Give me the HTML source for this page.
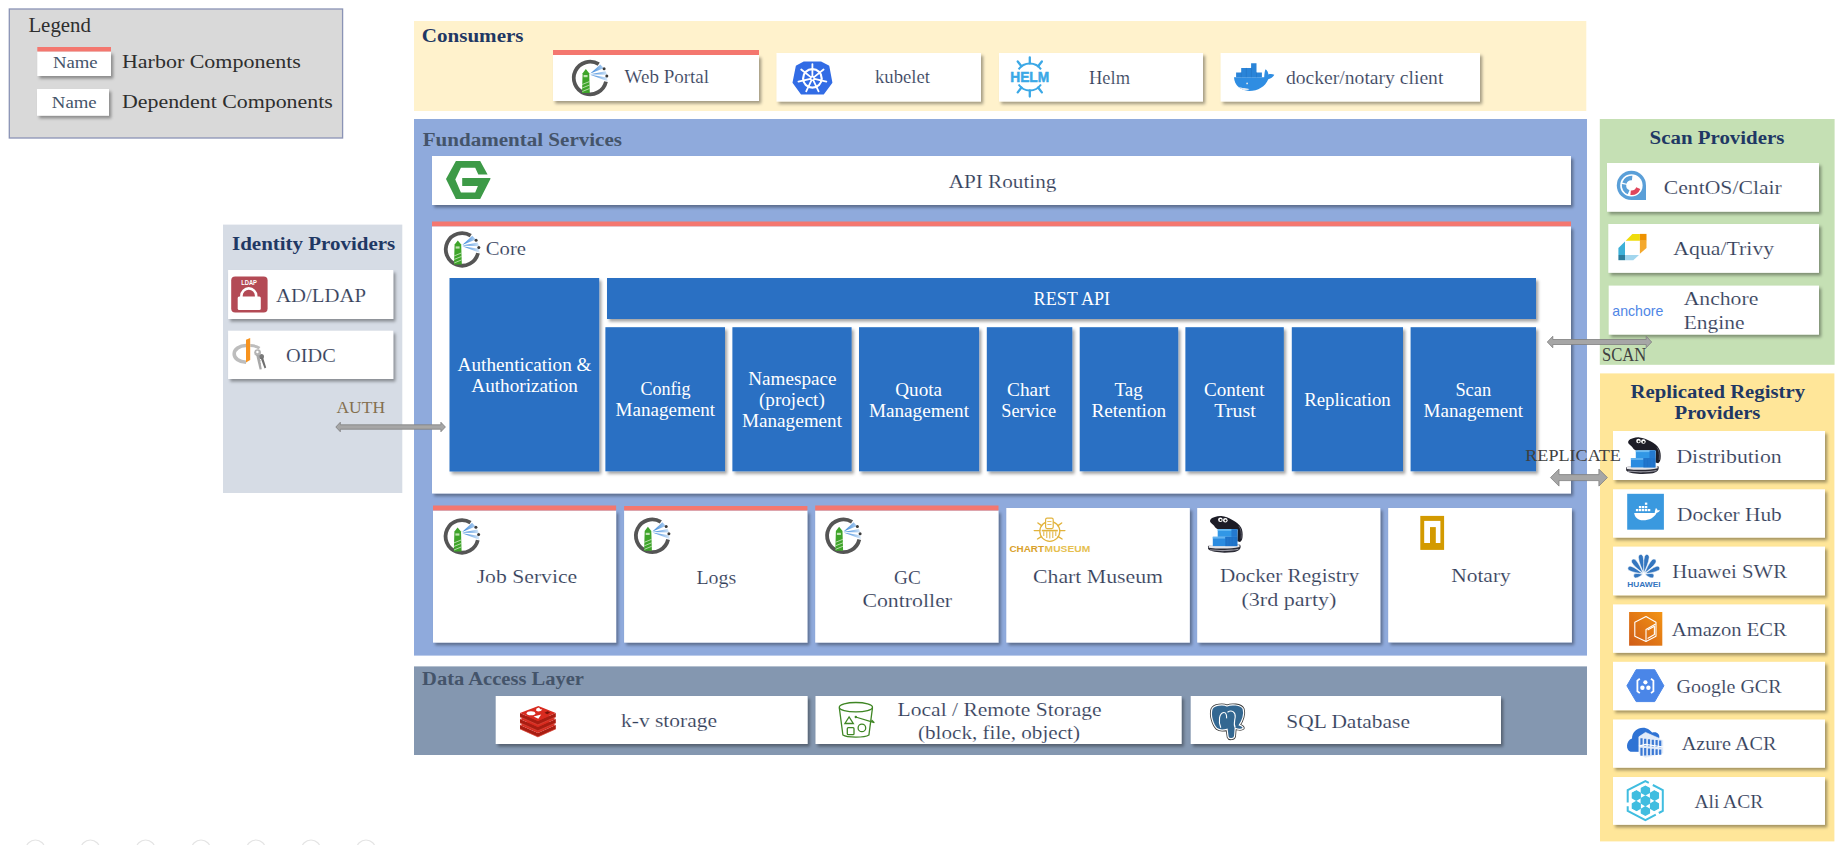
<!DOCTYPE html>
<html><head><meta charset="utf-8"><title>Harbor Architecture</title>
<style>
html,body{margin:0;padding:0;background:#fff;overflow:hidden}
svg{display:block}
svg{font-family:"Liberation Serif",serif}
</style></head><body>
<svg width="1838" height="845" viewBox="0 0 1838 845">
<defs>
<filter id="sh" x="-10%" y="-10%" width="130%" height="140%">
<feDropShadow dx="2.2" dy="2.6" stdDeviation="1.5" flood-color="#000" flood-opacity="0.36"/>
</filter>
<linearGradient id="rayg" x1="25" y1="0" x2="42" y2="0" gradientUnits="userSpaceOnUse"><stop offset="0" stop-color="#2f80d8"/><stop offset="1" stop-color="#d4e6f8"/></linearGradient>
<linearGradient id="ecrg" x1="0" y1="1" x2="1" y2="0"><stop offset="0" stop-color="#d05c17"/><stop offset="1" stop-color="#f39414"/></linearGradient>
<g id="harbor"><path d="M40.98,26.67 A16.3,16.3 0 1 1 33.74,9.18" fill="none" stroke="#555" stroke-width="3.8"/><polygon points="17.00,38.00 17.60,18.20 20.80,14.00 24.20,18.20 24.80,38.00" fill="#3ea42a"/><path d="M17.2,29.5 L24.6,26.5 M17.2,33 L24.6,30 M17.3,36.5 L24.6,33.5" stroke="#cfeac4" stroke-width="0.8"/><rect x="18.6" y="20" width="4" height="2.2" fill="#bfe3b0"/><polygon points="25.30,18.60 35.30,9.40 38.80,13.20" fill="url(#rayg)"/><polygon points="25.30,19.20 40.60,16.20 42.20,19.80" fill="url(#rayg)"/><polygon points="25.30,19.80 42.00,22.40 42.60,26.30" fill="url(#rayg)"/><circle cx="39.1" cy="13.8" r="1.5" fill="#3c3c3c"/><circle cx="41.8" cy="21" r="1.5" fill="#3c3c3c"/></g>
<g id="k8s"><path d="M16.1,4.2 L32.7,4.2 L40.5,8.2 L43.6,24.6 L35.3,35.8 L13.5,35.8 L5.3,24.6 L8.6,8.2 Z" fill="#326ce5" stroke="#326ce5" stroke-width="1.6" stroke-linejoin="round"/><circle cx="24.4" cy="20.4" r="9.3" fill="none" stroke="#fff" stroke-width="2.2"/><path d="M24.4,20.4 L24.40,6.10 M24.4,20.4 L35.58,11.48 M24.4,20.4 L38.34,23.58 M24.4,20.4 L30.60,33.28 M24.4,20.4 L18.20,33.28 M24.4,20.4 L10.46,23.58 M24.4,20.4 L13.22,11.48 " stroke="#fff" stroke-width="1.8" stroke-linecap="round"/><circle cx="24.4" cy="20.4" r="2.3" fill="#fff"/><circle cx="24.4" cy="20.4" r="1" fill="#326ce5"/></g>
<g id="helm"><path d="M13.61,15.35 A13.5,13.5 0 0 1 35.99,15.35 M13.61,30.45 A13.5,13.5 0 0 0 35.99,30.45" fill="none" stroke="#3ba8e6" stroke-width="2"/><path d="M24.80,9.40 L24.80,3.30 M16.49,12.26 L12.73,7.45 M33.11,12.26 L36.87,7.45 M24.80,36.40 L24.80,42.50 M16.49,33.54 L12.73,38.35 M33.11,33.54 L36.87,38.35 " stroke="#3ba8e6" stroke-width="2.3" stroke-linecap="round"/><text x="5.3" y="28.2" style="font-family:&quot;Liberation Sans&quot;,sans-serif" font-weight="bold" font-size="14.5" fill="#3ba8e6" stroke="#3ba8e6" stroke-width="0.5" textLength="38.9" lengthAdjust="spacingAndGlyphs">HELM</text></g>
<g id="whale"><path d="M4,19.3 L34.2,19.3 C34.3,16 34.8,12.5 35.6,11.2 C37.2,12.2 38.3,14.3 38.4,16.4 C40.2,15.8 42.6,15.9 44.3,16.8 C43.2,19 40.8,20.6 38.3,21.2 C35.3,28.5 28,32.9 19.3,32.9 C10.5,32.9 4.3,27 4,19.3 Z" fill="#2f8de2"/><path d="M6.1,14.4 H31.9 V19.3 H6.1 Z M11.2,9.9 H26.5 V14.4 H11.2 Z M21.1,5.2 H26.5 V9.9 H21.1 Z" fill="#2a84d8"/><path d="M11.2,14.4 V19.3 M16.3,9.9 V19.3 M21.4,9.9 V19.3 M26.5,14.4 V19.3" stroke="#2270c0" stroke-width="0.5"/><path d="M8,28.5 C12,30.6 16.5,29.8 19.5,31.2 C16,33.2 11,32 8,28.5 Z" fill="#dfe8f2"/><circle cx="17.1" cy="25.4" r="0.9" fill="#e8e8e8"/></g>
<g id="nginx"><polygon points="0.00,18.30 9.90,0.25 34.20,0.25 41.60,13.90 32.30,13.90 29.20,7.10 14.90,7.10 9.30,18.90 14.90,31.90 29.20,31.90 31.90,25.40 16.20,25.40 16.20,17.40 44.40,17.40 44.40,18.30 34.20,38.40 9.90,38.40" fill="#3d9a47"/></g>
<g id="ldap"><rect x="5.2" y="4.6" width="36.4" height="36" rx="4" fill="#b34a55"/><rect x="11.7" y="24.5" width="23.1" height="13.6" rx="1.5" fill="#fff"/><path d="M15.4,25.5 V23.8 A7.4,7.4 0 0 1 30.2,23.8 V25.5" fill="none" stroke="#fff" stroke-width="2.6"/><text x="15.2" y="13.1" style="font-family:&quot;Liberation Sans&quot;,sans-serif" font-weight="bold" font-size="6.8" fill="#fff" textLength="15.8" lengthAdjust="spacingAndGlyphs">LDAP</text></g>
<g id="oidc"><path d="M18,11.5 A11.8,8.4 0 0 0 18,28.3" fill="none" stroke="#bdbdbd" stroke-width="3.6"/><path d="M22.3,11.6 Q28,11.6 31.5,14.2" fill="none" stroke="#bdbdbd" stroke-width="3"/><polygon points="18.00,5.70 22.20,4.00 22.20,26.00 18.00,28.40" fill="#f7931e"/><circle cx="33.4" cy="22.5" r="2.6" fill="#7a7a7a"/><polygon points="32.6,24 35,23.6 38.2,33.6 36.6,34.4" fill="#6e6e6e"/><circle cx="29.6" cy="18.6" r="3.4" fill="#b4b4b4"/><circle cx="29.4" cy="18" r="1.2" fill="#fff"/><polygon points="28.2,21 31.2,21 33.8,35.2 31.6,35.6" fill="#a8a8a8"/><path d="M30.6,27 L32.6,26.6 M31.2,30 L33,29.6" stroke="#a8a8a8" stroke-width="1"/></g>
<g id="chartm"><circle cx="44.8" cy="19.3" r="10" fill="none" stroke="#e2b33c" stroke-width="1.3"/><path d="M29.2,18.6 H34.8 M54.8,18.6 H59.9 M36.61,13.56 L32.92,10.98 M52.99,13.56 L56.68,10.98 M36.32,24.60 L32.50,26.98 M53.28,24.60 L57.10,26.98 " stroke="#e2b33c" stroke-width="1.4" stroke-linecap="round"/><rect x="40.6" y="6.2" width="7.6" height="10.4" rx="1.5" fill="#fff" stroke="#e2b33c" stroke-width="1.2"/><path d="M42.3,9.5 H46.5 M42.3,12.5 H46.5" stroke="#e2b33c" stroke-width="0.8"/><rect x="36.8" y="17.8" width="16" height="1.6" fill="#e2b33c"/><path d="M38.8,19.4 V24 M41.8,19.4 V26 M44.8,19.4 V26.5 M47.8,19.4 V26 M50.8,19.4 V24" stroke="#e2b33c" stroke-width="1"/><text x="4.4" y="40.1" style="font-family:&quot;Liberation Sans&quot;,sans-serif" font-weight="bold" font-size="9.9" fill="#d9a12b" textLength="34.6" lengthAdjust="spacingAndGlyphs">CHART</text><text x="39.6" y="40.1" style="font-family:&quot;Liberation Sans&quot;,sans-serif" font-weight="bold" font-size="9.9" fill="#e6bf50" textLength="45.6" lengthAdjust="spacingAndGlyphs">MUSEUM</text></g>
<g id="distr"><path d="M6,35.6 C8,33.6 13,34.6 19,35 C26,35.4 33,33.4 38.2,34 C40,37 37.5,41 30.5,41.6 C21,42.4 10,42 6.2,38.4 Z" fill="#2a2a34"/><path d="M8,39.4 C12,38.6 17.5,40.4 23,39.8 C29,39.2 33.5,39.8 36.5,38.6" fill="none" stroke="#9a9aa4" stroke-width="1.1"/><path d="M6.8,34.6 C13,33.6 27,35.8 37.6,33.6 L37.6,36.2 C30,38 18,38.4 6.8,37 Z" fill="#e4e4e8"/><path d="M8.2,9.5 C9,7.5 11,6.6 13,6.2 C15,5.6 17,5.2 19.5,5.4 C23,5.6 27,7.5 30.5,9.3 C34,11 37.5,13.5 39.2,16.9 C40.6,19.5 41,23 40.6,26.5 C40.3,29 39.5,30.6 38.1,31.2 L35.4,30.6 L35.7,19 C32,18.2 22,18.2 16.3,18.5 C14.5,18.2 13.2,16.5 12.2,15 C11,13.6 9,12.6 8.2,11 Z" fill="#1c1c26"/><path d="M37,15.5 C39,18 39.8,22 39.2,28" fill="none" stroke="#60606c" stroke-width="0.9"/><circle cx="18.5" cy="9" r="2.3" fill="#fff"/><circle cx="23.4" cy="9.5" r="2.3" fill="#fff"/><circle cx="18.7" cy="9.4" r="1" fill="#111"/><circle cx="23.6" cy="9.9" r="1" fill="#111"/><rect x="15.8" y="18.5" width="19.6" height="7.6" fill="#3197e6"/><rect x="15.8" y="18.5" width="19.6" height="1.6" fill="#6cbcf4"/><rect x="10.9" y="26.1" width="24.5" height="9.3" fill="#2a8be0"/><rect x="10.9" y="26.1" width="12.5" height="1.8" fill="#64b4f0"/><rect x="23.4" y="26.1" width="12" height="9.3" fill="#1f72c8"/><rect x="29.5" y="18.5" width="5.9" height="7.6" fill="#2479cf"/><path d="M26,27 V35 M29,27 V35 M32,27 V35" stroke="#2a82d8" stroke-width="0.5"/></g>
<g id="redis"><path d="M5,24.9 L22.9,32.9 L40.8,24.9 L40.8,28.9 L22.9,36.9 L5,28.9 Z" fill="#a81d12"/><polygon points="5.00,24.90 23.40,18.00 40.80,24.90 22.90,32.90" fill="#d82b1f"/><path d="M5,28.9 L22.9,36.9 L40.8,28.9" fill="none" stroke="#e04a3c" stroke-width="0.7"/><path d="M5,18.9 L22.9,26.9 L40.8,18.9 L40.8,22.9 L22.9,30.9 L5,22.9 Z" fill="#a81d12"/><polygon points="5.00,18.90 23.40,12.00 40.80,18.90 22.90,26.90" fill="#d82b1f"/><path d="M5,22.9 L22.9,30.9 L40.8,22.9" fill="none" stroke="#e04a3c" stroke-width="0.7"/><path d="M5,12.9 L22.9,20.9 L40.8,12.9 L40.8,16.9 L22.9,24.9 L5,16.9 Z" fill="#a81d12"/><polygon points="5.00,12.90 23.40,6.00 40.80,12.90 22.90,20.90" fill="#d82b1f"/><path d="M5,16.9 L22.9,24.9 L40.8,16.9" fill="none" stroke="#e04a3c" stroke-width="0.7"/><ellipse cx="16" cy="13.2" rx="4.3" ry="2" fill="#fff"/><polygon points="21.50,8.50 24.00,7.60 25.30,9.30 27.30,9.60 25.80,11.00 23.00,11.40 21.00,10.60" fill="#fff"/><polygon points="18.60,16.60 26.20,14.60 23.30,18.70" fill="#fff"/><polygon points="29.50,12.80 32.50,11.20 35.20,12.60 32.20,14.20" fill="#7a1309"/></g>
<g id="bucket"><g fill="none" stroke="#3f8624" stroke-width="1.3"><ellipse cx="21.9" cy="9.2" rx="16.6" ry="4.7"/><path d="M5.3,9.6 L8.9,37 C13,39.8 30.5,39.8 34.9,37 L38.5,9.6"/><polygon points="10.9,25.5 15.1,19 19.3,25.5"/><rect x="13.3" y="29.7" width="6.7" height="7" rx="1"/><circle cx="27.9" cy="29.9" r="3.8"/><path d="M21.6,19 L40.3,24.7 L37.5,22"/></g><circle cx="21.8" cy="19" r="1.2" fill="#3f8624"/></g>
<g id="pg"><path d="M8,9 C10,4.5 19.5,4.2 23,6 C27,4 37,4.3 39.2,9 C40.8,14 38.3,21 35.3,25 C37.2,25.8 39.6,26.5 39.2,28.2 C37.5,29.8 33.5,29.3 31.2,28.3 L30.6,36 C30.2,39.2 25,39.6 24.1,37 L23.1,29.3 C20,30.2 15.2,30.2 13,28.6 C9,25 6,15 8,9 Z" fill="#336791" stroke="#3a3a3a" stroke-width="2.8"/><path d="M8,9 C10,4.5 19.5,4.2 23,6 C27,4 37,4.3 39.2,9 C40.8,14 38.3,21 35.3,25 C37.2,25.8 39.6,26.5 39.2,28.2 C37.5,29.8 33.5,29.3 31.2,28.3 L30.6,36 C30.2,39.2 25,39.6 24.1,37 L23.1,29.3 C20,30.2 15.2,30.2 13,28.6 C9,25 6,15 8,9 Z" fill="#336791" stroke="#fff" stroke-width="1.2"/><path d="M16.8,27.8 C14.2,21 15,13.2 19.8,12.5 C22.2,12.4 22.8,15.5 22.6,18.4 M23.5,12.3 C27.5,9.3 31.6,12 31.2,17 C30.8,21 29.2,24.2 31.2,27.6" fill="none" stroke="#fff" stroke-width="1.1"/></g>
<g id="clair"><path d="M34,19.4 L34,34 L19.4,34 A14.6,14.6 0 1 1 34,19.4 Z" fill="#5a9fd8"/><circle cx="19.4" cy="19.4" r="11.2" fill="#fff"/><path d="M10.27,16.43 A9.6,9.6 0 0 1 20.40,9.85 L19.94,14.23 A5.2,5.2 0 0 0 14.45,17.79 Z M15.80,28.30 A9.6,9.6 0 0 1 9.89,18.06 L14.25,18.68 A5.2,5.2 0 0 0 17.45,24.22 Z" fill="#5a9fd8"/><path d="M28.30,23.00 A9.6,9.6 0 0 1 18.40,28.95 L18.86,24.57 A5.2,5.2 0 0 0 24.22,21.35 Z" fill="#e0455b"/></g>
<g id="trivy"><polygon points="13.70,12.80 20.40,5.90 27.90,5.90 27.90,12.80" fill="#efdc0c"/><rect x="27.9" y="5.9" width="6.6" height="6.9" fill="#ee9200"/><polygon points="27.90,12.80 34.50,12.80 34.50,19.90 27.90,25.80" fill="#f4a92e"/><polygon points="6.40,19.90 13.00,13.50 13.00,27.00 6.40,27.00" fill="#3cb0d8"/><rect x="6.4" y="27" width="6.6" height="5.2" fill="#2b7c9c"/><polygon points="13.00,27.00 27.00,27.00 21.30,32.20 13.00,32.20" fill="#a2d6ee"/></g>
<g id="dhub"><rect x="5.2" y="3.8" width="36.7" height="35.9" fill="#3a99df"/><path d="M12.2,22.9 L32.7,22.9 C32.9,21 33.4,19 34,18 C35,18.7 35.6,19.8 35.6,20.6 C36.5,20.3 37.5,20.3 38,20.6 C37.2,21.8 36,22.6 34.5,22.9 C32.5,27.5 27,30.2 21.2,30.2 C15.5,30.2 12.5,26.5 12.2,22.9 Z" fill="#fff"/><rect x="13.9" y="19" width="2.4" height="2.2" fill="#fff"/><rect x="16.9" y="19" width="2.4" height="2.2" fill="#fff"/><rect x="19.9" y="19" width="2.4" height="2.2" fill="#fff"/><rect x="22.9" y="19" width="2.4" height="2.2" fill="#fff"/><rect x="25.9" y="19" width="2.4" height="2.2" fill="#fff"/><rect x="16.9" y="16" width="2.4" height="2.2" fill="#fff"/><rect x="19.9" y="16" width="2.4" height="2.2" fill="#fff"/><rect x="22.9" y="16" width="2.4" height="2.2" fill="#fff"/><rect x="22.9" y="12.6" width="2.4" height="2.2" fill="#fff"/></g>
<g id="huawei"><path d="M0,-1.2 C-1.12,-6.15 -2.88,-12.71 -2.38,-17.63 C-1.75,-20.91 1.75,-20.91 2.38,-17.63 C2.88,-12.71 1.12,-6.15 0,-1.2 Z" transform="translate(21.8,26.2) rotate(-10)" fill="#3476bf" stroke="#fff" stroke-width="0.5"/><path d="M0,-1.2 C-1.12,-6.15 -2.88,-12.71 -2.38,-17.63 C-1.75,-20.91 1.75,-20.91 2.38,-17.63 C2.88,-12.71 1.12,-6.15 0,-1.2 Z" transform="translate(21.8,26.2) rotate(10)" fill="#3476bf" stroke="#fff" stroke-width="0.5"/><path d="M0,-1.2 C-1.12,-5.70 -2.88,-11.78 -2.38,-16.34 C-1.75,-19.38 1.75,-19.38 2.38,-16.34 C2.88,-11.78 1.12,-5.70 0,-1.2 Z" transform="translate(21.8,26.2) rotate(-38)" fill="#3476bf" stroke="#fff" stroke-width="0.5"/><path d="M0,-1.2 C-1.12,-5.70 -2.88,-11.78 -2.38,-16.34 C-1.75,-19.38 1.75,-19.38 2.38,-16.34 C2.88,-11.78 1.12,-5.70 0,-1.2 Z" transform="translate(21.8,26.2) rotate(38)" fill="#3476bf" stroke="#fff" stroke-width="0.5"/><path d="M0,-1.2 C-1.08,-5.25 -2.76,-10.85 -2.28,-15.05 C-1.68,-17.85 1.68,-17.85 2.28,-15.05 C2.76,-10.85 1.08,-5.25 0,-1.2 Z" transform="translate(21.8,26.2) rotate(-67)" fill="#3476bf" stroke="#fff" stroke-width="0.5"/><path d="M0,-1.2 C-1.08,-5.25 -2.76,-10.85 -2.28,-15.05 C-1.68,-17.85 1.68,-17.85 2.28,-15.05 C2.76,-10.85 1.08,-5.25 0,-1.2 Z" transform="translate(21.8,26.2) rotate(67)" fill="#3476bf" stroke="#fff" stroke-width="0.5"/><path d="M0,-1.2 C-0.99,-3.15 -2.53,-6.51 -2.09,-9.03 C-1.54,-10.71 1.54,-10.71 2.09,-9.03 C2.53,-6.51 0.99,-3.15 0,-1.2 Z" transform="translate(21.8,26.2) rotate(-101)" fill="#3476bf" stroke="#fff" stroke-width="0.5"/><path d="M0,-1.2 C-0.99,-3.15 -2.53,-6.51 -2.09,-9.03 C-1.54,-10.71 1.54,-10.71 2.09,-9.03 C2.53,-6.51 0.99,-3.15 0,-1.2 Z" transform="translate(21.8,26.2) rotate(101)" fill="#3476bf" stroke="#fff" stroke-width="0.5"/><text x="5.2" y="38.9" style="font-family:&quot;Liberation Sans&quot;,sans-serif" font-weight="bold" font-size="7.5" fill="#3476bf" textLength="33.4" lengthAdjust="spacingAndGlyphs">HUAWEI</text></g>
<g id="ecr"><rect x="7.1" y="6" width="33.2" height="33.7" fill="url(#ecrg)"/><g fill="none" stroke="#fff" stroke-width="1.1" stroke-linejoin="round"><path d="M24,10.6 L34,16.3 L34,30.2 L24,35.4 L12.8,30.2 L12.8,16.3 Z"/><path d="M24,35.4 L24,23.6 L33.6,18"/><path d="M25.6,24 L32.4,20.2 L32.4,28.6 L25.6,32.4"/></g></g>
<g id="gcr"><polygon points="4.90,21.80 14.20,5.70 32.70,5.70 41.90,21.80 32.70,37.60 14.20,37.60" fill="#4a86e8" stroke="#4a86e8" stroke-width="1" stroke-linejoin="round"/><path d="M17.8,14.7 L15.4,16.6 L15.4,27.2 L17.8,29.1 M29,14.7 L31.4,16.6 L31.4,27.2 L29,29.1" fill="none" stroke="#fff" stroke-width="1.8"/><circle cx="23.4" cy="18.3" r="2.1" fill="#fff"/><circle cx="20.4" cy="23.7" r="2.2" fill="#fff"/><circle cx="26.4" cy="23.7" r="2.2" fill="#fff"/></g>
<g id="acr"><path d="M8.5,31.8 C3.5,30.5 3.8,20.5 10,18.6 C10,11 17,6.5 24,8.2 C27,9 29,11 30.2,12.6 C34.5,11.2 38.2,14 37.2,18 L37.2,32 Z" fill="#2f73d4"/><polygon points="16.90,16.80 23.50,12.40 41.40,20.20 41.40,33.60 23.50,38.00 16.90,34.00" fill="#e2ebf8" stroke="#fff" stroke-width="0.6"/><path d="M19.5,18.30 V25.45 M19.5,27.65 V35.67 M23.2,18.74 V25.82 M23.2,28.02 V35.49 M27,19.20 V26.20 M27,28.40 V35.30 M30.8,19.66 V26.58 M30.8,28.78 V35.11 M34.6,20.11 V26.96 M34.6,29.16 V34.92 M38.2,20.54 V27.32 M38.2,29.52 V34.74 " stroke="#3a78d4" stroke-width="2.2"/><path d="M16.9,26.2 L23.5,24.4 L41.4,27" fill="none" stroke="#fff" stroke-width="1.2"/></g>
<clipPath id="aliclip"><polygon points="23.4,7.6 37.2,14.6 37.2,30.6 23.4,38 9.4,30.6 9.4,14.6"/></clipPath>
<g id="aliacr"><path d="M26.8,4.8 L23.4,3.2 L5.7,12.2 L5.7,24.5 M5.7,28.2 L5.7,32.9 L23.4,42.2 L33.8,36.7 M36.8,35 L40.8,32.9 L40.8,12.2 L30.8,7" fill="none" stroke="#40bde0" stroke-width="2"/><g clip-path="url(#aliclip)"><polygon points="23.40,17.20 28.25,20.00 28.25,25.60 23.40,28.40 18.55,25.60 18.55,20.00" fill="#40bde0"/><polygon points="23.40,6.80 28.08,9.50 28.08,14.90 23.40,17.60 18.72,14.90 18.72,9.50" fill="#40bde0"/><polygon points="32.58,12.10 37.26,14.80 37.26,20.20 32.58,22.90 27.90,20.20 27.90,14.80" fill="#40bde0"/><polygon points="32.58,22.70 37.26,25.40 37.26,30.80 32.58,33.50 27.90,30.80 27.90,25.40" fill="#40bde0"/><polygon points="23.40,28.00 28.08,30.70 28.08,36.10 23.40,38.80 18.72,36.10 18.72,30.70" fill="#40bde0"/><polygon points="14.22,22.70 18.90,25.40 18.90,30.80 14.22,33.50 9.54,30.80 9.54,25.40" fill="#40bde0"/><polygon points="14.22,12.10 18.90,14.80 18.90,20.20 14.22,22.90 9.54,20.20 9.54,14.80" fill="#40bde0"/></g></g>
</defs>
<rect x="9.3" y="9" width="333.30" height="129.00" fill="#d9d9d9" stroke="#8a93b5" stroke-width="1.3"/>
<rect x="414" y="21" width="1172.30" height="90.00" fill="#fff2cc"/>
<rect x="414" y="119" width="1173.00" height="536.60" fill="#8faadc"/>
<rect x="414" y="666.4" width="1173.00" height="88.60" fill="#8497b0"/>
<rect x="223" y="224.6" width="179.30" height="268.40" fill="#d6dce5"/>
<rect x="1599.8" y="119" width="234.80" height="245.80" fill="#c5e0b4"/>
<rect x="1600" y="373.4" width="234.40" height="468.00" fill="#ffe699"/>
<rect x="37.3" y="51.5" width="73.70" height="24.50" fill="#fff" filter="url(#sh)"/><rect x="37.3" y="47" width="73.70" height="4.50" fill="#f4776f"/>
<rect x="37" y="89" width="72.00" height="26.70" fill="#fff" filter="url(#sh)"/>
<text x="28.40" y="31.60" font-size="21" fill="#2e2e2e" textLength="62.52" lengthAdjust="spacingAndGlyphs">Legend</text>
<text x="52.90" y="68.30" font-size="16.5" fill="#44546a" textLength="44.71" lengthAdjust="spacingAndGlyphs">Name</text>
<text x="51.80" y="108.30" font-size="16.5" fill="#44546a" textLength="44.91" lengthAdjust="spacingAndGlyphs">Name</text>
<text x="122.00" y="68.30" font-size="18.5" fill="#2e2e2e" textLength="178.81" lengthAdjust="spacingAndGlyphs">Harbor Components</text>
<text x="122.00" y="108.30" font-size="18.5" fill="#2e2e2e" textLength="210.80" lengthAdjust="spacingAndGlyphs">Dependent Components</text>
<text x="421.80" y="42.00" font-size="18.5" font-weight="bold" fill="#1f3864" textLength="101.72" lengthAdjust="spacingAndGlyphs">Consumers</text>
<rect x="553" y="55" width="206.00" height="46.00" fill="#fff" filter="url(#sh)"/><rect x="553" y="50" width="206.00" height="5.00" fill="#f4776f"/>
<rect x="776.5" y="53" width="204.50" height="48.50" fill="#fff" filter="url(#sh)"/>
<rect x="999" y="53" width="204.00" height="48.50" fill="#fff" filter="url(#sh)"/>
<rect x="1220.6" y="53" width="259.40" height="48.50" fill="#fff" filter="url(#sh)"/>
<text x="624.60" y="83.10" font-size="18" fill="#34405a" stroke="#fff" stroke-width="0.15" textLength="84.48" lengthAdjust="spacingAndGlyphs">Web Portal</text>
<text x="875.00" y="83.00" font-size="18" fill="#34405a" stroke="#fff" stroke-width="0.15" textLength="55.02" lengthAdjust="spacingAndGlyphs">kubelet</text>
<text x="1089.00" y="83.60" font-size="18" fill="#34405a" stroke="#fff" stroke-width="0.15" textLength="40.99" lengthAdjust="spacingAndGlyphs">Helm</text>
<text x="1286.00" y="83.50" font-size="18" fill="#34405a" stroke="#fff" stroke-width="0.15" textLength="157.39" lengthAdjust="spacingAndGlyphs">docker/notary client</text>
<text x="422.70" y="145.70" font-size="18.5" font-weight="bold" fill="#44546a" textLength="199.29" lengthAdjust="spacingAndGlyphs">Fundamental Services</text>
<rect x="432" y="156" width="1139.00" height="49.00" fill="#fff" filter="url(#sh)"/>
<rect x="432" y="226.3" width="1139.00" height="267.20" fill="#fff" filter="url(#sh)"/><rect x="432" y="221.5" width="1139.00" height="4.80" fill="#f4776f"/>
<rect x="449.5" y="278" width="149.70" height="193.50" fill="#2970c3" filter="url(#sh)"/>
<rect x="607" y="278" width="929.00" height="41.00" fill="#2970c3" filter="url(#sh)"/>
<rect x="605.4" y="327.2" width="119.60" height="144.10" fill="#2970c3" filter="url(#sh)"/>
<rect x="732.4" y="327.2" width="119.20" height="144.10" fill="#2970c3" filter="url(#sh)"/>
<rect x="859" y="327.2" width="120.10" height="144.10" fill="#2970c3" filter="url(#sh)"/>
<rect x="986.8" y="327.2" width="85.50" height="144.10" fill="#2970c3" filter="url(#sh)"/>
<rect x="1079.7" y="327.2" width="98.50" height="144.10" fill="#2970c3" filter="url(#sh)"/>
<rect x="1185.4" y="327.2" width="98.40" height="144.10" fill="#2970c3" filter="url(#sh)"/>
<rect x="1291.8" y="327.2" width="111.20" height="144.10" fill="#2970c3" filter="url(#sh)"/>
<rect x="1410.6" y="327.2" width="125.40" height="144.10" fill="#2970c3" filter="url(#sh)"/>
<text x="948.70" y="187.60" font-size="19.5" fill="#34405a" stroke="#fff" stroke-width="0.15" textLength="107.68" lengthAdjust="spacingAndGlyphs">API Routing</text>
<text x="485.80" y="255.00" font-size="19.5" fill="#34405a" stroke="#fff" stroke-width="0.15" textLength="40.18" lengthAdjust="spacingAndGlyphs">Core</text>
<text x="1033.60" y="305.00" font-size="18" fill="#ffffff" textLength="76.41" lengthAdjust="spacingAndGlyphs">REST API</text>
<text x="457.60" y="370.60" font-size="18" fill="#ffffff" textLength="133.92" lengthAdjust="spacingAndGlyphs">Authentication &amp;</text>
<text x="471.30" y="392.40" font-size="18" fill="#ffffff" textLength="106.59" lengthAdjust="spacingAndGlyphs">Authorization</text>
<text x="640.40" y="395.00" font-size="18" fill="#ffffff" textLength="50.21" lengthAdjust="spacingAndGlyphs">Config</text>
<text x="615.60" y="416.00" font-size="18" fill="#ffffff" textLength="99.41" lengthAdjust="spacingAndGlyphs">Management</text>
<text x="748.30" y="384.80" font-size="18" fill="#ffffff" textLength="88.22" lengthAdjust="spacingAndGlyphs">Namespace</text>
<text x="759.00" y="406.00" font-size="18" fill="#ffffff" textLength="65.80" lengthAdjust="spacingAndGlyphs">(project)</text>
<text x="742.00" y="427.00" font-size="18" fill="#ffffff" textLength="100.01" lengthAdjust="spacingAndGlyphs">Management</text>
<text x="895.30" y="395.50" font-size="18" fill="#ffffff" textLength="46.78" lengthAdjust="spacingAndGlyphs">Quota</text>
<text x="869.00" y="416.60" font-size="18" fill="#ffffff" textLength="100.01" lengthAdjust="spacingAndGlyphs">Management</text>
<text x="1007.00" y="395.50" font-size="18" fill="#ffffff" textLength="42.98" lengthAdjust="spacingAndGlyphs">Chart</text>
<text x="1001.30" y="416.60" font-size="18" fill="#ffffff" textLength="54.92" lengthAdjust="spacingAndGlyphs">Service</text>
<text x="1114.50" y="395.50" font-size="18" fill="#ffffff" textLength="28.20" lengthAdjust="spacingAndGlyphs">Tag</text>
<text x="1091.40" y="416.60" font-size="18" fill="#ffffff" textLength="74.82" lengthAdjust="spacingAndGlyphs">Retention</text>
<text x="1204.00" y="395.50" font-size="18" fill="#ffffff" textLength="60.48" lengthAdjust="spacingAndGlyphs">Content</text>
<text x="1214.20" y="416.70" font-size="18" fill="#ffffff" textLength="41.61" lengthAdjust="spacingAndGlyphs">Trust</text>
<text x="1304.20" y="405.50" font-size="18" fill="#ffffff" textLength="86.50" lengthAdjust="spacingAndGlyphs">Replication</text>
<text x="1455.40" y="395.50" font-size="18" fill="#ffffff" textLength="35.78" lengthAdjust="spacingAndGlyphs">Scan</text>
<text x="1423.50" y="416.70" font-size="18" fill="#ffffff" textLength="99.51" lengthAdjust="spacingAndGlyphs">Management</text>
<rect x="433" y="510.5" width="183.10" height="132.10" fill="#fff" filter="url(#sh)"/><rect x="433" y="505.5" width="183.10" height="5.00" fill="#f4776f"/>
<rect x="624.1" y="510.5" width="183.30" height="132.10" fill="#fff" filter="url(#sh)"/><rect x="624.1" y="506" width="183.30" height="4.50" fill="#f4776f"/>
<rect x="815.2" y="510.5" width="183.30" height="132.10" fill="#fff" filter="url(#sh)"/><rect x="815.2" y="505.5" width="183.30" height="5.00" fill="#f4776f"/>
<rect x="1006.3" y="508" width="183.50" height="134.60" fill="#fff" filter="url(#sh)"/>
<rect x="1197.2" y="508" width="183.10" height="134.60" fill="#fff" filter="url(#sh)"/>
<rect x="1388.2" y="508" width="183.70" height="134.40" fill="#fff" filter="url(#sh)"/>
<text x="476.70" y="583.00" font-size="19.5" fill="#34405a" stroke="#fff" stroke-width="0.15" textLength="100.51" lengthAdjust="spacingAndGlyphs">Job Service</text>
<text x="696.40" y="583.50" font-size="19.5" fill="#34405a" stroke="#fff" stroke-width="0.15" textLength="39.80" lengthAdjust="spacingAndGlyphs">Logs</text>
<text x="894.00" y="583.80" font-size="19.5" fill="#34405a" stroke="#fff" stroke-width="0.15" textLength="26.78" lengthAdjust="spacingAndGlyphs">GC</text>
<text x="862.40" y="607.00" font-size="19.5" fill="#34405a" stroke="#fff" stroke-width="0.15" textLength="89.71" lengthAdjust="spacingAndGlyphs">Controller</text>
<text x="1033.00" y="582.70" font-size="19.5" fill="#34405a" stroke="#fff" stroke-width="0.15" textLength="129.98" lengthAdjust="spacingAndGlyphs">Chart Museum</text>
<text x="1220.00" y="582.00" font-size="19.5" fill="#34405a" stroke="#fff" stroke-width="0.15" textLength="139.28" lengthAdjust="spacingAndGlyphs">Docker Registry</text>
<text x="1241.40" y="606.40" font-size="19.5" fill="#34405a" stroke="#fff" stroke-width="0.15" textLength="95.07" lengthAdjust="spacingAndGlyphs">(3rd party)</text>
<text x="1451.20" y="582.40" font-size="19.5" fill="#34405a" stroke="#fff" stroke-width="0.15" textLength="59.59" lengthAdjust="spacingAndGlyphs">Notary</text>
<text x="422.10" y="685.40" font-size="18.5" font-weight="bold" fill="#44546a" textLength="161.89" lengthAdjust="spacingAndGlyphs">Data Access Layer</text>
<rect x="495.7" y="696" width="311.90" height="48.00" fill="#fff" filter="url(#sh)"/>
<rect x="815.5" y="696" width="366.10" height="48.00" fill="#fff" filter="url(#sh)"/>
<rect x="1190.7" y="696" width="310.30" height="48.00" fill="#fff" filter="url(#sh)"/>
<text x="621.00" y="727.00" font-size="19.5" fill="#34405a" stroke="#fff" stroke-width="0.15" textLength="96.02" lengthAdjust="spacingAndGlyphs">k-v storage</text>
<text x="897.60" y="715.60" font-size="19.5" fill="#34405a" stroke="#fff" stroke-width="0.15" textLength="203.99" lengthAdjust="spacingAndGlyphs">Local / Remote Storage</text>
<text x="918.00" y="739.00" font-size="19.5" fill="#34405a" stroke="#fff" stroke-width="0.15" textLength="161.97" lengthAdjust="spacingAndGlyphs">(block, file, object)</text>
<text x="1286.30" y="727.70" font-size="19.5" fill="#34405a" stroke="#fff" stroke-width="0.15" textLength="123.68" lengthAdjust="spacingAndGlyphs">SQL Database</text>
<text x="232.00" y="249.70" font-size="18.5" font-weight="bold" fill="#1f3864" textLength="163.29" lengthAdjust="spacingAndGlyphs">Identity Providers</text>
<rect x="228.1" y="270" width="165.10" height="49.00" fill="#fff" filter="url(#sh)"/>
<rect x="228.1" y="330.7" width="165.10" height="48.30" fill="#fff" filter="url(#sh)"/>
<text x="276.00" y="301.70" font-size="19.5" fill="#34405a" stroke="#fff" stroke-width="0.15" textLength="90.02" lengthAdjust="spacingAndGlyphs">AD/LDAP</text>
<text x="286.00" y="362.00" font-size="19.5" fill="#34405a" stroke="#fff" stroke-width="0.15" textLength="49.69" lengthAdjust="spacingAndGlyphs">OIDC</text>
<text x="336.50" y="413.00" font-size="17" fill="#84704f" textLength="48.50" lengthAdjust="spacingAndGlyphs">AUTH</text>
<text x="1649.60" y="144.00" font-size="18.5" font-weight="bold" fill="#1f3864" textLength="134.78" lengthAdjust="spacingAndGlyphs">Scan Providers</text>
<rect x="1607" y="163" width="212.00" height="48.70" fill="#fff" filter="url(#sh)"/>
<rect x="1608.3" y="224" width="210.70" height="48.80" fill="#fff" filter="url(#sh)"/>
<rect x="1608.7" y="285.6" width="210.30" height="49.00" fill="#fff" filter="url(#sh)"/>
<text x="1663.80" y="193.75" font-size="19.5" fill="#34405a" stroke="#fff" stroke-width="0.15" textLength="117.99" lengthAdjust="spacingAndGlyphs">CentOS/Clair</text>
<text x="1673.30" y="255.00" font-size="19.5" fill="#34405a" stroke="#fff" stroke-width="0.15" textLength="100.91" lengthAdjust="spacingAndGlyphs">Aqua/Trivy</text>
<text x="1683.70" y="305.40" font-size="19.5" fill="#34405a" stroke="#fff" stroke-width="0.15" textLength="74.61" lengthAdjust="spacingAndGlyphs">Anchore</text>
<text x="1683.70" y="329.20" font-size="19.5" fill="#34405a" stroke="#fff" stroke-width="0.15" textLength="60.80" lengthAdjust="spacingAndGlyphs">Engine</text>
<text x="1602.00" y="360.50" font-size="18.5" fill="#404040" textLength="44.30" lengthAdjust="spacingAndGlyphs">SCAN</text>
<text x="1630.50" y="398.00" font-size="18.5" font-weight="bold" fill="#1f3864" textLength="174.50" lengthAdjust="spacingAndGlyphs">Replicated Registry</text>
<text x="1674.60" y="419.40" font-size="18.5" font-weight="bold" fill="#1f3864" textLength="85.80" lengthAdjust="spacingAndGlyphs">Providers</text>
<rect x="1613" y="431" width="212.00" height="49.00" fill="#fff" filter="url(#sh)"/>
<text x="1676.40" y="463.30" font-size="19.5" fill="#34405a" stroke="#fff" stroke-width="0.15" textLength="105.32" lengthAdjust="spacingAndGlyphs">Distribution</text>
<rect x="1613" y="489.3" width="212.00" height="48.30" fill="#fff" filter="url(#sh)"/>
<text x="1677.00" y="520.60" font-size="19.5" fill="#34405a" stroke="#fff" stroke-width="0.15" textLength="104.70" lengthAdjust="spacingAndGlyphs">Docker Hub</text>
<rect x="1613" y="546.6" width="212.00" height="48.70" fill="#fff" filter="url(#sh)"/>
<text x="1672.30" y="577.80" font-size="19.5" fill="#34405a" stroke="#fff" stroke-width="0.15" textLength="114.69" lengthAdjust="spacingAndGlyphs">Huawei SWR</text>
<rect x="1613" y="604.4" width="212.00" height="48.40" fill="#fff" filter="url(#sh)"/>
<text x="1671.80" y="635.70" font-size="19.5" fill="#34405a" stroke="#fff" stroke-width="0.15" textLength="114.90" lengthAdjust="spacingAndGlyphs">Amazon ECR</text>
<rect x="1613" y="661.8" width="212.00" height="48.40" fill="#fff" filter="url(#sh)"/>
<text x="1676.50" y="692.80" font-size="19.5" fill="#34405a" stroke="#fff" stroke-width="0.15" textLength="105.00" lengthAdjust="spacingAndGlyphs">Google GCR</text>
<rect x="1613" y="719.5" width="212.00" height="48.20" fill="#fff" filter="url(#sh)"/>
<text x="1681.70" y="750.30" font-size="19.5" fill="#34405a" stroke="#fff" stroke-width="0.15" textLength="94.78" lengthAdjust="spacingAndGlyphs">Azure ACR</text>
<rect x="1613" y="777" width="212.00" height="47.80" fill="#fff" filter="url(#sh)"/>
<text x="1694.40" y="808.30" font-size="19.5" fill="#34405a" stroke="#fff" stroke-width="0.15" textLength="68.78" lengthAdjust="spacingAndGlyphs">Ali ACR</text>
<text x="1525.30" y="460.60" font-size="17" fill="#404040" textLength="95.51" lengthAdjust="spacingAndGlyphs">REPLICATE</text>
<path d="M335.8,427 L340.3,422.25 L340.3,424.8 L440.9,424.8 L440.9,422.25 L445.4,427 L440.9,431.75 L440.9,429.2 L340.3,429.2 L340.3,431.75 Z" fill="#a6a6a6" stroke="#7f7f7f" stroke-width="0.8" stroke-linejoin="miter"/>
<path d="M1547.3,342 L1552.8,336.25 L1552.8,339.5 L1646.2,339.5 L1646.2,336.25 L1651.7,342 L1646.2,347.75 L1646.2,344.5 L1552.8,344.5 L1552.8,347.75 Z" fill="#a6a6a6" stroke="#7f7f7f" stroke-width="0.8" stroke-linejoin="miter"/>
<path d="M1550.5,477.6 L1559.0,469.1 L1559.0,474.6 L1598.9,474.6 L1598.9,469.1 L1607.4,477.6 L1598.9,486.1 L1598.9,480.6 L1559.0,480.6 L1559.0,486.1 Z" fill="#a6a6a6" stroke="#7f7f7f" stroke-width="0.8" stroke-linejoin="miter"/>
<circle cx="35.4" cy="849.5" r="9.5" fill="none" stroke="#e4e4e4" stroke-width="1.2"/>
<circle cx="90.3" cy="849.5" r="9.5" fill="none" stroke="#e4e4e4" stroke-width="1.2"/>
<circle cx="145.6" cy="849.5" r="9.5" fill="none" stroke="#e4e4e4" stroke-width="1.2"/>
<circle cx="201" cy="849.5" r="9.5" fill="none" stroke="#e4e4e4" stroke-width="1.2"/>
<circle cx="256" cy="849.5" r="9.5" fill="none" stroke="#e4e4e4" stroke-width="1.2"/>
<circle cx="311" cy="849.5" r="9.5" fill="none" stroke="#e4e4e4" stroke-width="1.2"/>
<circle cx="366" cy="849.5" r="9.5" fill="none" stroke="#e4e4e4" stroke-width="1.2"/>
<use href="#harbor" transform="translate(565,55)"/>
<use href="#harbor" transform="translate(437,226.4)"/>
<use href="#harbor" transform="translate(436.8,513.4)"/>
<use href="#harbor" transform="translate(627.1,512.8)"/>
<use href="#harbor" transform="translate(818.3,512.8)"/>
<use href="#k8s" transform="translate(788,58)"/>
<use href="#helm" transform="translate(1005,54)"/>
<use href="#whale" transform="translate(1230,58)"/>
<use href="#nginx" transform="translate(446,160.7)"/>
<use href="#ldap" transform="translate(226,272)"/>
<use href="#oidc" transform="translate(228,334)"/>
<use href="#chartm" transform="translate(1005,512)"/>
<use href="#distr" transform="translate(1201.9,510.7)"/>
<use href="#distr" transform="translate(1620,432)"/>
<rect x="1420.3" y="515.9" width="23.8" height="34" fill="#d39a00"/><rect x="1424.2" y="520.9" width="16.2" height="22.1" fill="#fff"/><rect x="1430" y="527.1" width="5.8" height="15.9" fill="#d39a00"/>
<use href="#redis" transform="translate(515,700)"/>
<use href="#bucket" transform="translate(834,698)"/>
<use href="#pg" transform="translate(1204,700)"/>
<use href="#clair" transform="translate(1612,166)"/>
<use href="#trivy" transform="translate(1612,228)"/>
<text x="1612.3" y="315.8" style="font-family:&quot;Liberation Sans&quot;,sans-serif" font-size="14.2" fill="#4f86e6" textLength="51" lengthAdjust="spacingAndGlyphs">anchore</text>
<use href="#dhub" transform="translate(1622,490)"/>
<use href="#huawei" transform="translate(1622,548)"/>
<use href="#ecr" transform="translate(1622,606)"/>
<use href="#gcr" transform="translate(1622,664)"/>
<use href="#acr" transform="translate(1622,720)"/>
<use href="#aliacr" transform="translate(1622,778)"/>
</svg>
</body></html>
